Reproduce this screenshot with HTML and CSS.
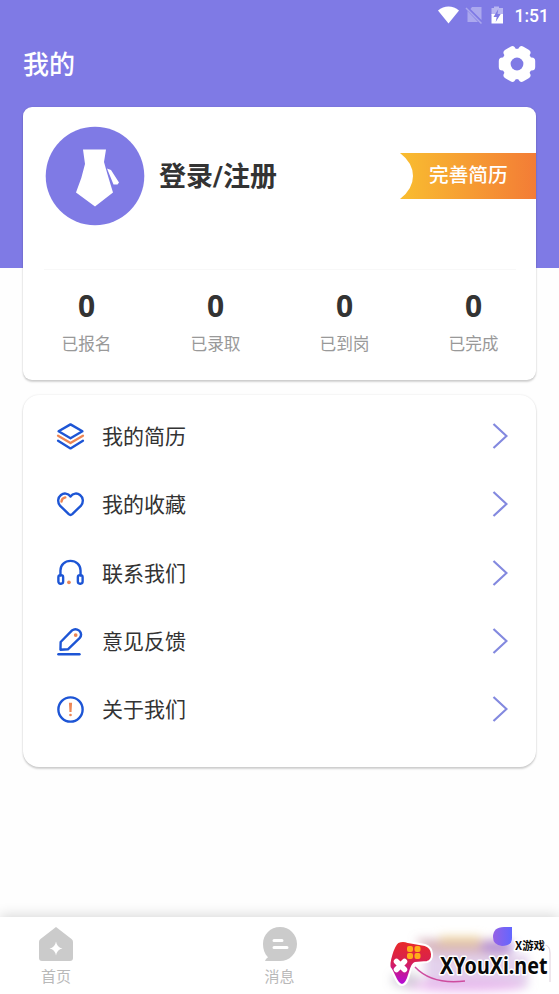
FILE: index.html
```html
<!DOCTYPE html>
<html lang="zh-CN">
<head>
<meta charset="utf-8">
<title>我的</title>
<link rel="stylesheet" href="styles.css">
</head>
<body>
<div class="app">
  <header class="hero">
    <div class="status">
      <svg class="status-icons" width="72" height="22" viewBox="0 0 72 22">
        <path fill="#fff" d="M0 5.500C6 .2 15 .2 21 5.500L10.500 18.500z"/>
        <path fill="#fff" opacity=".35" d="M34 2H43.500V15L32.500 4zM29.500 6L40 17H29.500z"/>
        <path stroke="#fff" stroke-opacity=".35" stroke-width="1.500" d="M28 3L43.500 18.500"/>
        <path fill="#fff" opacity=".45" d="M56 1.500h5V3h4v7H53.500V3H56z"/>
        <path fill="#fff" d="M53.500 9H65v9.500H53.500z"/>
        <path fill="#7f7ae5" d="M60.300 4L55.500 12h3.200l-1 5 5-8h-3.200z"/>
      </svg>
      <span>1:51</span>
    </div>
    <div class="title-row">
      <h1>我的</h1>
      <svg class="gear" width="38" height="38" viewBox="-19 -19 38 38">
        <g fill="#fff">
          <circle r="15.300"/>
          <rect x="-18.200" y="-6.500" width="36.400" height="13" rx="3.500"/>
          <rect x="-18.200" y="-6.500" width="36.400" height="13" rx="3.500" transform="rotate(60)"/>
          <rect x="-18.200" y="-6.500" width="36.400" height="13" rx="3.500" transform="rotate(120)"/>
        </g>
        <circle r="6.400" fill="#7f7ae5"/>
      </svg>
    </div>
  </header>

  <main>
    <section class="card profile">
      <div class="user">
        <svg class="avatar" width="100" height="100" viewBox="0 0 100 100">
          <circle cx="50" cy="50" r="49.300" fill="#7f7ae5"/>
          <path fill="#fff" d="M38 23.500H61L59 36Q62 47 68 66.500L50 80.500 31 66.500Q37 52 40 38zM62 42.500L66 44 74 56.500 72.500 58.500 68.500 58.500z"/>
        </svg>
        <h2>登录/注册</h2>
        <div class="ribbon">
          <svg width="136" height="46" viewBox="0 0 136 46">
            <defs><linearGradient id="orange"><stop offset="0" stop-color="#f9bd30"/><stop offset="1" stop-color="#f37c36"/></linearGradient></defs>
            <path fill="url(#orange)" d="M0 0H136V46H0Q13 36 13 23T0 0z"/>
          </svg>
          <span>完善简历</span>
        </div>
      </div>
      <div class="stats">
        <div><b>0</b><span>已报名</span></div>
        <div><b>0</b><span>已录取</span></div>
        <div><b>0</b><span>已到岗</span></div>
        <div><b>0</b><span>已完成</span></div>
      </div>
    </section>

    <nav class="card menu">
      <a><svg class="icon" viewBox="0 0 28 28"><path class="blue" d="M14 2.300L25.500 9 14 15.700 2.500 9z"/><path class="orange" d="M2 13.200L14 20.200 26 13.200"/><path class="blue" d="M2 18L14 25.500 26 18"/></svg><span>我的简历</span><svg class="arrow" viewBox="0 0 16 28"><path d="M1.500 2L14.500 14 1.500 26"/></svg></a>
      <a><svg class="icon" viewBox="0 0 28 28"><path class="blue" d="M14 6.300C11.500 2.800 7.500 2.700 4.800 4.800 1.700 7.300 1.200 11.700 3.800 15L12.300 23.300Q14 24.800 15.700 23.300L24.200 15C26.800 11.700 26.300 7.300 23.200 4.800 20.500 2.700 16.500 2.800 14 6.300z"/><path class="orange" d="M5.300 11.200Q5.500 8 9 7.200"/></svg><span>我的收藏</span><svg class="arrow" viewBox="0 0 16 28"><path d="M1.500 2L14.500 14 1.500 26"/></svg></a>
      <a><svg class="icon" viewBox="0 0 28 28"><path class="blue" d="M4.300 17V12C4.300 6.500 8.500 2.800 14 2.800S23.700 6.500 23.700 12V17"/><rect class="blue" x="2.300" y="16.500" width="4.600" height="8.300" rx="2"/><rect class="blue" x="21.100" y="16.500" width="4.600" height="8.300" rx="2"/><circle class="dot" cx="12.500" cy="23.500" r="1.800"/></svg><span>联系我们</span><svg class="arrow" viewBox="0 0 16 28"><path d="M1.500 2L14.500 14 1.500 26"/></svg></a>
      <a><svg class="icon" viewBox="0 0 28 28"><path class="blue" d="M4.500 14.500L15.500 3.300Q18.700 .8 22.400 3.500 25.700 6.800 23 10.500L11.500 21.500 4.300 22z"/><circle class="dot" cx="19" cy="7.800" r="1.800"/><path class="blue" d="M2.300 26.300H22.700"/></svg><span>意见反馈</span><svg class="arrow" viewBox="0 0 16 28"><path d="M1.500 2L14.500 14 1.500 26"/></svg></a>
      <a><svg class="icon" viewBox="0 0 28 28"><circle class="blue" cx="14" cy="14" r="11.700"/><path class="dot" d="M12.500 7.500H15.500L15 16.500H13z"/><circle class="dot" cx="14" cy="19.300" r="1.300"/></svg><span>关于我们</span><svg class="arrow" viewBox="0 0 16 28"><path d="M1.500 2L14.500 14 1.500 26"/></svg></a>
    </nav>
  </main>

  <footer class="tabs">
    <div class="tab">
      <svg width="36" height="34" viewBox="0 0 36 34"><path fill="#cbcbcb" d="M18 0L33.500 12Q35 13 35 15V31Q35 34 32 34H4Q1 34 1 31V15Q1 13 2.500 12z"/><path fill="#fff" d="M18 14.500Q19 20.500 24.500 21.500 19 22.500 18 28.500 17 22.500 11.500 21.500 17 20.500 18 14.500z"/></svg>
      <span>首页</span>
    </div>
    <div class="tab">
      <svg width="36" height="34" viewBox="0 0 36 34"><path fill="#cbcbcb" d="M18 0C27.500 0 35 7.500 35 17S27.500 34 18 34H3Q3.500 32 6 30.300C2.500 27 1 22 1 17 1 7.500 8.500 0 18 0z"/><path stroke="#fff" stroke-width="3" stroke-linecap="round" d="M12 13.500H20M12 20.500H25"/></svg>
      <span>消息</span>
    </div>
    <div class="tab"></div>
  </footer>

  <svg class="watermark" width="189" height="77" viewBox="370 917 189 77">
    <defs>
      <filter id="soft" x="-50%" y="-80%" width="200%" height="260%"><feGaussianBlur stdDeviation="5"/></filter>
      <linearGradient id="pad" x2="0" y2="1"><stop stop-color="#e92b27"/><stop offset=".45" stop-color="#d8204e"/><stop offset="1" stop-color="#b20be0"/></linearGradient>
      <linearGradient id="drop"><stop stop-color="#9661e5"/><stop offset="1" stop-color="#6266ff"/></linearGradient>
    </defs>
    <g filter="url(#soft)">
      <path fill="#c08a98" opacity=".6" d="M415 939H510V955H430z"/>
      <path fill="#edcf8c" opacity=".7" d="M440 936H480V944H440z"/>
      <path fill="#c8a4da" opacity=".5" d="M425 955H528V988H425z"/>
      <ellipse cx="464" cy="986" rx="60" ry="7" fill="#e9a2ed" opacity=".5"/>
      <ellipse cx="406" cy="980" rx="15" ry="8" fill="#a19aad" opacity=".4"/>
      <ellipse cx="498" cy="947" rx="18" ry="6" fill="#a27de8" opacity=".6"/>
    </g>
    <path fill="url(#drop)" d="M493 937Q493 927 504 927H512V938Q512 946 502 946 493 945 493 937z"/>
    <path fill="none" stroke="#ddd0dc" stroke-width="1" d="M544 945Q550 945 550 953V982"/>
    <path fill="none" stroke="#ce4c9f" stroke-width="1.500" d="M415 967Q432 985 465 981"/>
    <path fill="url(#pad)" stroke="#fff" stroke-width="2" d="M398 942Q403 940 408 942L425 945C434 948 434 960 427 962L415 963C409 964 410 985 402 985 396 985 394 972 390 968 388 963 393 946 398 942z"/>
    <g fill="#ffad19"><rect x="407" y="946" width="6" height="6" rx="2"/><rect x="414.500" y="946" width="6" height="6" rx="2"/><rect x="407" y="953" width="6" height="6" rx="2"/><rect x="414.500" y="953" width="6" height="6" rx="2"/></g>
    <path stroke="#fff" stroke-width="5.500" stroke-linecap="round" d="M396.500 961.500L404.500 969.500M404.500 961.500L396.500 969.500"/>
    <text class="site" x="440" y="974" textLength="107.500" lengthAdjust="spacingAndGlyphs">XYouXi.net</text>
    <text class="site-cn" x="515" y="950" textLength="30" lengthAdjust="spacingAndGlyphs">X游戏</text>
  </svg>
</div>
</body>
</html>
```
FILE: styles.css
```css
* { box-sizing: border-box; }
body {
  margin: 0;
  background: #fefefe;
  color: #333;
  font-family: Roboto, "Noto Sans CJK SC", sans-serif;
}
h1, h2 { margin: 0; }
svg { display: block; flex: none; }
.app {
  position: relative;
  display: flex;
  flex-direction: column;
  height: 994px;
  overflow: hidden;
}
.hero { height: 268px; flex: none; background: #7f7ae5; color: #fff; }
.status {
  display: flex;
  justify-content: flex-end;
  align-items: center;
  height: 32px;
  padding-right: 10px;
  font-size: 17.500px;
  font-weight: 500;
  line-height: 32px;
}
.status-icons { margin-right: 5px; }
.title-row {
  display: flex;
  justify-content: space-between;
  align-items: center;
  height: 64px;
  padding: 0 23px;
}
h1 { padding-top: 2px; font-size: 26px; font-weight: 500; line-height: 38px; }
main { margin: -161px 23px 0; flex: 1; }
.card { background: #fff; box-shadow: 0 2px 2px rgba(0, 0, 0, .17), 0 0 2px rgba(0, 0, 0, .12); }
.profile { height: 273px; border-radius: 9px; }
.user {
  display: flex;
  align-items: center;
  height: 163px;
  padding: 0 0 25px 22px;
  background: linear-gradient(#f8f8f8, #f8f8f8) center bottom / 472px 1px no-repeat;
}
h2 { margin-left: 14px; padding-top: 2px; font-size: 27px; font-weight: 700; line-height: 40px; }
.ribbon { display: grid; width: 136px; margin-left: auto; }
.ribbon > * { grid-area: 1 / 1; }
.ribbon span {
  z-index: 1;
  padding-left: 29px;
  color: #fff;
  font-size: 19.700px;
  font-weight: 500;
  line-height: 46px;
}
.stats { display: grid; grid-template-columns: repeat(4, 129px); margin: 0 -1px; padding-top: 16px; }
.stats div { display: flex; flex-direction: column; align-items: center; }
.stats b { font: 700 30px/40px "Noto Sans", sans-serif; }
.stats span { margin-top: 7px; color: #999; font-size: 16.700px; line-height: 24px; }
.menu { height: 372px; margin-top: 15px; padding: 7px 28px 0 33px; border-radius: 16px; }
.menu a { display: flex; align-items: center; height: 68.300px; }
.menu span { flex: 1; margin-left: 18px; padding-top: 2px; font-size: 21px; line-height: 30px; }
.icon { width: 29px; height: 29px; margin-right: -1px; fill: none; stroke-width: 2.300; stroke-linecap: round; stroke-linejoin: round; }
.blue { stroke: #1d55d5; }
.orange { stroke: #ed8654; }
.dot { fill: #ed8654; stroke: none; }
.arrow { width: 16px; height: 28px; fill: none; stroke: #8389df; stroke-width: 2.200; }
.tabs {
  display: grid;
  grid-template-columns: 112px 335px 112px;
  height: 77px;
  background: #fff;
  box-shadow: 0 -2px 12px rgba(0, 0, 0, .15);
}
.tab { display: flex; flex-direction: column; align-items: center; padding-top: 10px; color: #b9b9b9; font-size: 15px; }
.tab span { margin-top: 5px; line-height: 22px; }
.watermark { position: absolute; right: 0; bottom: 0; overflow: visible; }
.site, .site-cn { fill: #080808; stroke: #fff; stroke-width: 3px; stroke-linejoin: round; paint-order: stroke; }
.site { font: 700 24px "Noto Sans", sans-serif; }
.site-cn { font: 700 11px "Noto Sans CJK SC", sans-serif; }
```
